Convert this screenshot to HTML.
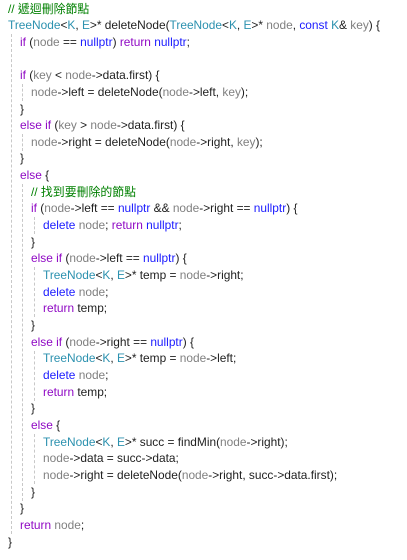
<!DOCTYPE html>
<html><head><meta charset="utf-8"><style>
html,body{margin:0;padding:0;background:#fff;width:407px;height:560px;overflow:hidden;}
body{position:relative;font-family:"Liberation Sans","Noto Sans CJK TC",sans-serif;font-size:11.9px;color:#1e1e1e;}
.l{position:absolute;left:0;height:17px;line-height:17px;white-space:pre;}
.k{color:#8f08c4}.b{color:#1a1aff}.t{color:#2b91af}.p{color:#808080}.c{color:#008000}
.g{position:absolute;width:0;border-left:1px dashed #c8c8c8;}
</style></head><body>
<div class="g" style="left:11px;top:34px;height:500px"></div>
<div class="g" style="left:22px;top:84px;height:17px"></div>
<div class="g" style="left:22px;top:134px;height:17px"></div>
<div class="g" style="left:22px;top:184px;height:317px"></div>
<div class="g" style="left:34px;top:217px;height:17px"></div>
<div class="g" style="left:34px;top:267px;height:50px"></div>
<div class="g" style="left:34px;top:351px;height:50px"></div>
<div class="g" style="left:34px;top:434px;height:50px"></div>
<script>
var L=[
[8,'<span class="c">// 遞迴刪除節點</span>'],
[8,'<span class="t">TreeNode</span>&lt;<span class="t">K</span>, <span class="t">E</span>&gt;* deleteNode(<span class="t">TreeNode</span>&lt;<span class="t">K</span>, <span class="t">E</span>&gt;* <span class="p">node</span>, <span class="b">const</span> <span class="t">K</span>&amp; <span class="p">key</span>) {'],
[20,'<span class="k">if</span> (<span class="p">node</span> == <span class="b">nullptr</span>) <span class="k">return</span> <span class="b">nullptr</span>;'],
[20,''],
[20,'<span class="k">if</span> (<span class="p">key</span> &lt; <span class="p">node</span>-&gt;data.first) {'],
[31,'<span class="p">node</span>-&gt;left = deleteNode(<span class="p">node</span>-&gt;left, <span class="p">key</span>);'],
[20,'}'],
[20,'<span class="k">else if</span> (<span class="p">key</span> &gt; <span class="p">node</span>-&gt;data.first) {'],
[31,'<span class="p">node</span>-&gt;right = deleteNode(<span class="p">node</span>-&gt;right, <span class="p">key</span>);'],
[20,'}'],
[20,'<span class="k">else</span> {'],
[31,'<span class="c">// 找到要刪除的節點</span>'],
[31,'<span class="k">if</span> (<span class="p">node</span>-&gt;left == <span class="b">nullptr</span> &amp;&amp; <span class="p">node</span>-&gt;right == <span class="b">nullptr</span>) {'],
[43,'<span class="b">delete</span> <span class="p">node</span>; <span class="k">return</span> <span class="b">nullptr</span>;'],
[31,'}'],
[31,'<span class="k">else if</span> (<span class="p">node</span>-&gt;left == <span class="b">nullptr</span>) {'],
[43,'<span class="t">TreeNode</span>&lt;<span class="t">K</span>, <span class="t">E</span>&gt;* temp = <span class="p">node</span>-&gt;right;'],
[43,'<span class="b">delete</span> <span class="p">node</span>;'],
[43,'<span class="k">return</span> temp;'],
[31,'}'],
[31,'<span class="k">else if</span> (<span class="p">node</span>-&gt;right == <span class="b">nullptr</span>) {'],
[43,'<span class="t">TreeNode</span>&lt;<span class="t">K</span>, <span class="t">E</span>&gt;* temp = <span class="p">node</span>-&gt;left;'],
[43,'<span class="b">delete</span> <span class="p">node</span>;'],
[43,'<span class="k">return</span> temp;'],
[31,'}'],
[31,'<span class="k">else</span> {'],
[43,'<span class="t">TreeNode</span>&lt;<span class="t">K</span>, <span class="t">E</span>&gt;* succ = findMin(<span class="p">node</span>-&gt;right);'],
[43,'<span class="p">node</span>-&gt;data = succ-&gt;data;'],
[43,'<span class="p">node</span>-&gt;right = deleteNode(<span class="p">node</span>-&gt;right, succ-&gt;data.first);'],
[31,'}'],
[20,'}'],
[20,'<span class="k">return</span> <span class="p">node</span>;'],
[8,'}']
];
var h='';
for(var i=0;i<L.length;i++){h+='<div class="l" style="top:'+(0.5+i*16.66).toFixed(1)+'px;left:'+L[i][0]+'px">'+L[i][1]+'</div>';}
document.write(h);
</script>
</body></html>
